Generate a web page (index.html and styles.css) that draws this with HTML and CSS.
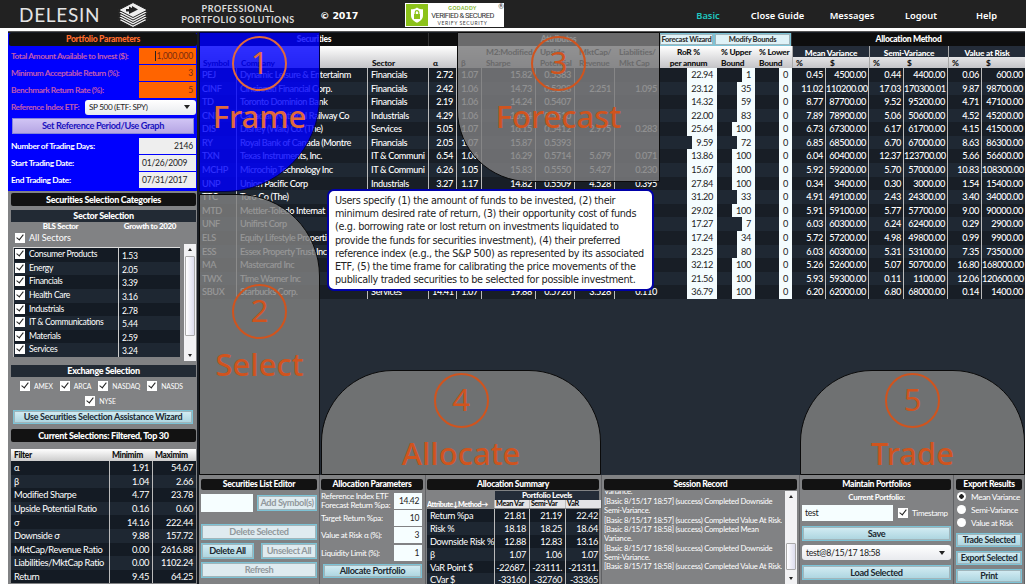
FILE: index.html
```html
<!DOCTYPE html>
<html lang="en">
<head>
<meta charset="utf-8">
<title>Delesin Portfolio Solutions</title>
<link rel="stylesheet" href="styles.css">
</head>
<body>
<header class="top">
  <div class="brand">DELESIN</div>
  <svg class="logo" viewBox="0 0 30 26" width="30" height="26">
    <g fill="#eee" stroke="#222" stroke-width="1">
      <path d="M.5 18 15 11l14.500 7L15 25.500z"/><path d="M.5 15.500 15 8.500l14.500 7L15 23z"/><path d="M.5 13 15 6l14.500 7L15 20.500z"/><path d="M.5 10.500 15 3.500l14.500 7L15 18z"/><path d="M.5 8 15 .5l14.500 7.500L15 15.500z"/>
    </g>
    <path d="M11 4.500v2.500h-3v2.500h3v2.500l9-4.500-6-3.500v2z" fill="#222"/>
  </svg>
  <div class="tag">PROFESSIONAL<br>PORTFOLIO SOLUTIONS</div>
  <div class="copy">© 2017</div>
  <div class="badge">
    <div class="badge-ico"><svg viewBox="0 0 22 22" width="22" height="22"><path d="M11 3.500c2 1.500 4 1.800 6 1.800v6c0 4-3 6-6 7.500-3-1.500-6-3.500-6-7.500v-6c2 0 4-.3 6-1.800z" fill="#fff"/><rect x="8" y="10" width="6" height="5" fill="#8cc21a"/><path d="M9.200 10V8.500a1.800 1.800 0 0 1 3.600 0V10" fill="none" stroke="#8cc21a" stroke-width="1.200"/></svg></div>
    <div class="badge-txt"><span class="gd">GODADDY</span><span class="vs">VERIFIED &amp; SECURED</span><span class="vf">VERIFY SECURITY</span></div>
    <span class="reg">®</span>
  </div>
  <nav class="nav"><a class="on">Basic</a><a>Close Guide</a><a>Messages</a><a>Logout</a><a>Help</a></nav>
</header>
<div class="app">
  <aside class="side">
    <section class="params">
      <h2 class="bar orange">Portfolio Parameters</h2>
      <div class="prow hot"><label>Total Amount Available to Invest ($):</label><span class="val"><i class="caret"></i>1,000,000</span></div>
      <div class="prow hot"><label>Minimum Acceptable Return (%):</label><span class="val">3</span></div>
      <div class="prow hot"><label>Benchmark Return Rate (%):</label><span class="val">5</span></div>
      <div class="refidx"><label>Reference Index ETF:</label><span class="combo">SP 500 (ETF: SPY)<i class="tri"></i></span></div>
      <div class="btn big lilac">Set Reference Period/Use Graph</div>
      <div class="prow"><label>Number of Trading Days:</label><span class="val">2146</span></div>
      <div class="prow"><label>Start Trading Date:</label><span class="val left">01/26/2009</span></div>
      <div class="prow"><label>End Trading Date:</label><span class="val left">07/31/2017</span></div>
    </section>
    <section class="cats">
      <h2 class="bar">Securities Selection Categories</h2>
      <h3 class="sub">Sector Selection</h3>
      <div class="cathead"><span>BLS Sector</span><span>Growth to 2020</span></div>
      <div class="all"><i class="ck"></i>All Sectors</div>
      <div class="listwrap"><div class="list" id="sectors"></div><div class="sb"><i class="up"></i><i class="thumb"></i><i class="dn"></i></div></div>
      <h3 class="sub ex">Exchange Selection</h3>
      <div class="exch"><span><i class="ck"></i>AMEX</span><span><i class="ck"></i>ARCA</span><span><i class="ck"></i>NASDAQ</span><span><i class="ck"></i>NASDS</span></div>
      <div class="exch nyse"><span><i class="ck"></i>NYSE</span></div>
      <div class="btn wiz">Use Securities Selection Assistance Wizard</div>
      <h2 class="bar cur">Current Selections: Filtered, Top 30</h2>
      <table class="filter"><thead><tr><th>Filter</th><th>Minimim</th><th>Maximim</th></tr></thead><tbody id="filters"></tbody></table>
    </section>
  </aside>
  <main class="main">
    <section class="grid">
      <div class="ghead">
        <div class="g t-sec">Securities</div><div class="g t-al"></div><div class="g t-att">Attributes</div><div class="g btn t-fw">Forecast Wizard</div><div class="g btn t-mb">Modify Bounds</div><div class="g t-am">Allocation Method</div>
      </div>
      <div class="cols chead">
        <span>Symbol</span><span>Company</span><span>Sector</span><span>α</span><span>β</span><span>M2:Modified<br>Sharpe</span><span>Upside<br>Potential</span><span>MktCap/<br>Revenue</span><span>Liabilities/<br>Mkt Cap</span><span class="ctr">RoR %<br>per annum</span><span>% Upper<br>Bound</span><span>% Lower<br>Bound</span>
        <div class="meth"><b>Mean Variance</b><em>%</em><em>$</em></div><div class="meth m2"><b>Semi-Variance</b><em>%</em><em>$</em></div><div class="meth m3"><b>Value at Risk</b><em>%</em><em>$</em></div>
      </div>
      <div id="rows"></div>
      <div class="ov frame"><i>1</i><b>Frame</b></div>
      <div class="ov select"><i>2</i><b>Select</b></div>
      <div class="ov forecast"><i>3</i><b>Forecast</b></div>
      <div class="ov allocate"><i>4</i><b>Allocate</b></div>
      <div class="ov trade"><i>5</i><b>Trade</b></div>
      <div class="tip">Users specify (1) the amount of funds to be invested, (2) their<br>minimum desired rate of return, (3) their opportunity cost of funds<br>(e.g. borrowing rate or lost return on investments liquidated to<br>provide the funds for securities investment), (4) their preferred<br>reference index (e.g., the S&amp;P 500) as represented by its associated<br>ETF, (5) the time frame for calibrating the price movements of the<br>publically traded securities to be selected for possible investment.</div>
    </section>
    <section class="dock">
      <div class="pane p1"><h2 class="bar">Securities List Editor</h2>
        <div class="r a"><span class="inp"></span><span class="btn off">Add Symbol(s)</span></div>
        <div class="btn off b1">Delete Selected</div>
        <div class="r b"><span class="btn">Delete All</span><span class="btn off">Unselect All</span></div>
        <div class="btn off b2">Refresh</div>
      </div>
      <div class="pane p2"><h2 class="bar">Allocation Parameters</h2>
        <div class="ap"><label>Reference Index ETF<br>Forecast Return %pa:</label><span>14.42</span></div>
        <div class="ap"><label>Target Return %pa:</label><span>10</span></div>
        <div class="ap"><label>Value at Risk α (%):</label><span>3</span></div>
        <div class="ap"><label>Liquidity Limit (%):</label><span>1</span></div>
        <div class="btn">Allocate Portfolio</div>
      </div>
      <div class="pane p3"><h2 class="bar">Allocation Summary</h2>
        <div class="lv">Portfolio Levels</div>
        <div class="sm sh"><span>Attribute↓Method→</span><span>Mean Var</span><span>Semi-Var</span><span>VaR</span></div>
        <div id="summary"></div>
      </div>
      <div class="pane p4"><h2 class="bar">Session Record</h2>
        <div class="logwrap"><div class="log"><div class="cut">Variance.</div>[Basic 8/15/17 18:57] (success) Completed Downside<br>Semi-Variance.<br>[Basic 8/15/17 18:57] (success) Completed Value At Risk.<br>[Basic 8/15/17 18:58] (success) Completed Mean<br>Variance.<br>[Basic 8/15/17 18:58] (success) Completed Downside<br>Semi-Variance.<br>[Basic 8/15/17 18:58] (success) Completed Value At Risk.</div><div class="sb low"><i class="up"></i><i class="thumb"></i><i class="dn"></i></div></div>
      </div>
      <div class="pane p5"><h2 class="bar">Maintain Portfolios</h2>
        <div class="cp">Current Portfolio:</div>
        <div class="r"><span class="inp">test</span><span class="ts"><i class="ck"></i>Timestamp</span></div>
        <div class="btn">Save</div>
        <div class="combo">test@8/15/17 18:58<i class="tri"></i></div>
        <div class="btn">Load Selected</div>
      </div>
      <div class="pane p6"><h2 class="bar">Export Results</h2>
        <div class="rad on">Mean Variance</div><div class="rad">Semi-Variance</div><div class="rad">Value at Risk</div>
        <div class="btn">Trade Selected</div><div class="btn">Export Selected</div><div class="btn">Print</div>
      </div>
    </section>
  </main>
</div>
<script src="app.js"></script>
</body>
</html>
```
FILE: styles.css
```css
* { box-sizing: border-box; }
body { margin: 0; width: 1026px; height: 586px; overflow: hidden; background: #fff; font: 9.5px/12px Lato, "Noto Sans", sans-serif; letter-spacing: -.35px; color: #fff; }
h2, h3 { margin: 0; font-size: 9px; letter-spacing: -.3px; text-align: center; font-weight: 900; }
i, em { font-style: normal; }
.top { height: 28px; background: #222; display: flex; align-items: center; padding-left: 19px; letter-spacing: 0; }
.brand { width: 99px; font-size: 19px; font-weight: 400; letter-spacing: .7px; line-height: 28px; padding-top: 2px; white-space: nowrap; color: #e4e4e4; }
.logo { margin-top: 1px; }
.tag { width: 114px; margin-left: 33px; text-align: center; font-size: 9px; font-weight: 700; letter-spacing: .53px; line-height: 11.500px; white-space: nowrap; color: #ddd; }
.copy { margin-left: 25px; width: 85px; font: bold 9.500px "DejaVu Sans", sans-serif; letter-spacing: -.2px; padding-top: 3px; }
.badge { width: 99px; height: 24px; background: #fff; display: flex; align-items: center; position: relative; padding: 1px; margin-top: 2px; }
.badge-ico { background: #8cc21a; width: 22px; height: 22px; }
.badge-txt { display: flex; flex-direction: column; align-items: center; flex: 1; padding-right: 6px; white-space: nowrap; }
.gd { font-size: 5px; line-height: 6px; color: #7ab31a; font-weight: 700; letter-spacing: .4px; }
.vs { font: 7.500px/9px Roboto, sans-serif; color: #333; letter-spacing: -.5px; font-weight: 400; }
.vf { font-size: 5px; line-height: 6px; color: #444; letter-spacing: .6px; }
.reg { position: absolute; right: 0; top: 0; font-size: 7px; line-height: 6px; color: #333; }
.nav { flex: 1; display: grid; grid-template-columns: 64px 75px 74px 64px 67px; justify-content: end; text-align: center; font: 600 9.300px/12px "Noto Sans", sans-serif; padding: 3px 6px 0 0; white-space: nowrap; }
.on { color: #1fc8c0; }
.app { margin: 3px 1px 0 8px; height: 553px; border-top: 1px solid #555; background: #181c22; display: flex; padding-top: 1px; }
.side { width: 189px; flex: none; }
.main { flex: 1; margin-left: 2px; min-width: 0; display: flex; flex-direction: column; }
.bar { background: #121212; border-radius: 2px; height: 13px; line-height: 13px; }
.params { background: #0000fe; height: 158px; padding: 0 1px 0 3px; }
.params .bar { margin: 0 -1px 1px -2px; }
.orange { color: #ff6c2c; font-size: 8.600px; }
.prow { display: flex; justify-content: space-between; height: 17.300px; align-items: center; white-space: nowrap; }
.prow label, .refidx label { font-size: 8.400px; font-weight: 700; }
.hot label, .refidx label { color: #c05ab0; letter-spacing: -.45px; }
.hot label { font-size: 8.400px; }
.val { width: 57px; height: 16px; background: #eee; color: #222; text-align: right; padding-right: 3px; line-height: 16px; font-size: 8.500px; letter-spacing: -.2px; }
.val.left { text-align: left; padding-left: 3px; }
.hot .val { background: #ff6400; color: #7a2c10; }
.caret { display: inline-block; width: 1px; height: 10px; background: #222; vertical-align: -2px; }
.refidx { display: flex; align-items: center; justify-content: space-between; height: 17px; white-space: nowrap; }
.combo { display: flex; align-items: center; justify-content: space-between; background: linear-gradient(#fff, #e8eaee); color: #222; height: 15px; border-radius: 3px; padding: 0 6px 0 4px; font-size: 8.800px; }
.refidx .combo { width: 111px; font-size: 8.200px; }
.refidx label { font-size: 8.200px; }
.tri { border: 3px solid transparent; border-top: 4px solid #222; border-bottom: 0; }
.btn { display: block; background: linear-gradient(#d4edf4, #abd4df); border: 1px solid #7cc3d6; outline: 1px solid #a0b5bb; outline-offset: -2px; color: #202830; text-align: center; font-weight: 700; font-size: 9.200px; height: 14px; line-height: 12px; white-space: nowrap; }
.btn.off { background: #dfebf0; color: #91989c; }
.lilac { background: linear-gradient(#d0c4f4, #b6a6e4); border-color: #8585d8; color: #1a12c0; height: 16px; line-height: 14px; margin: 2px 2px 3px 1px; outline: 0; }
.cats { background: #818284; height: 393px; padding: 2px 1px 0 3px; }
.cats .bar { margin: 0; height: 13px; line-height: 13px; }
.sub { background: #222a34; height: 12px; line-height: 12px; margin-top: 4px; }
.cathead { display: grid; grid-template-columns: 99px 80px; text-align: center; font-size: 8px; font-weight: 900; line-height: 9px; margin-top: 0; }
.all { display: flex; gap: 4px; align-items: center; padding-left: 4px; height: 12px; margin-top: 1px; letter-spacing: 0; font-size: 9px; }
.ck { flex: none; display: inline-block; width: 10px; height: 10px; background: #fff; position: relative; }
.ck::after { content: ""; position: absolute; left: 3px; top: 0; width: 3px; height: 6px; border: solid #222; border-width: 0 1.500px 1.500px 0; transform: rotate(38deg); }
.listwrap { display: flex; justify-content: space-between; height: 117px; margin-top: 0; padding-left: 2px; }
.list { width: 167px; height: 110px; margin-top: 3px; background: #141b24; overflow: hidden; border-top: 1px solid #ddd; border-left: 1px solid #bbb; }
.list div { height: 13.650px; display: grid; grid-template-columns: 10px 94px 60px; }
.list div:nth-child(even) { background: #1e2732; }
.list .ck { margin-top: 1px; margin-left: 1px; }
.list span { padding-left: 5px; font-size: 8.600px; line-height: 12px; white-space: nowrap; }
.list span:last-child { border-left: 1px solid #ccc; line-height: 16px; padding-left: 3px; }
.sb { width: 12px; background: #f2f2f4; display: flex; flex-direction: column; align-items: center; }
.sb .up { border: 2.500px solid transparent; border-top: 0; border-bottom: 3.500px solid #222; margin-top: 4px; }
.sb .thumb { width: 10px; height: 80px; margin-top: 5px; background: linear-gradient(90deg, #fff, #dde); border: 1px solid #aaa; border-radius: 1px; }
.sb .dn { border: 2.500px solid transparent; border-bottom: 0; border-top: 3.500px solid #222; margin: auto 0 4px; }
.cats .ex { height: 12px; line-height: 12px; }
.exch { display: flex; padding: 3px 13px 0 9px; height: 15px; font-size: 6.800px; font-weight: 400; justify-content: space-between; line-height: 12px; letter-spacing: -.1px; }
.exch span { display: flex; gap: 4px; align-items: center; height: 12px; }
.exch.nyse { justify-content: center; padding: 3px 19px 0 13px; height: 15px; }
.wiz { margin: 3px 3px 5px 2px; letter-spacing: -.3px; font-size: 9px; }
.filter { margin-top: 7px; width: 185px; border-spacing: 0; table-layout: fixed; }
.filter th { background: linear-gradient(#fff, #ccc); color: #111; text-align: left; font-size: 8.400px; font-weight: 900; padding: 0 3px; height: 12px; line-height: 10px; }
.filter th:first-child { width: 98px; }
.filter th:nth-child(2) { width: 43px; }
.filter td { height: 13.600px; line-height: 13px; padding: 0 3px; text-align: right; border-left: 1px solid #bbb; background: #141b24; font-size: 9.300px; }
.filter td:first-child { text-align: left; border: 0; white-space: nowrap; }
.filter tr:nth-child(even) td { background: #1e2732; }
.grid { position: relative; height: 442px; background: #242c36; }
.ghead { display: grid; grid-template-columns: 229px 29px 202px 55px 77px 1fr; height: 13px; background: #0e0e0e; }
.g { font-size: 8.500px; font-weight: 900; line-height: 13px; text-align: center; height: 13px; border-left: 1px solid #333; letter-spacing: -.3px; }
.g.btn { line-height: 12px; background: #dff2f7; border: 1px solid #7cc3d6; font-size: 7.500px; color: #333; }
.cols { display: grid; grid-template-columns: 38px 131px 61px 28px 25px 54px 39px 40px 45px 57px 38px 37px 34px 43px 35px 44px 34px 1fr; }
.chead { height: 22px; background: linear-gradient(#fff, #c4c4c8); color: #111; font-size: 8.300px; font-weight: 900; line-height: 10.500px; align-items: end; letter-spacing: -.2px; white-space: nowrap; }
.chead > span { padding-left: 4px; }
.chead .ctr { text-align: center; padding: 0; }
.meth { grid-column: 13 / 15; display: grid; grid-template-columns: 34px 1fr; height: 22px; padding-top: 2px; border-left: 1px solid #aaa; background: linear-gradient(#242c38 11px, #e4e4e6 11px, #c4c4c8); }
.meth.m2 { grid-column: 15 / 17; }
.meth.m3 { grid-column: 17 / 19; }
.meth b { grid-column: 1 / 3; color: #fff; text-align: center; line-height: 10px; height: 9px; }
.meth em { padding-left: 3px; line-height: 10px; }
.row { height: 13.580px; background: #181e26; white-space: nowrap; line-height: 14px; font-weight: 500; font-size: 9.200px; }
.row:nth-child(even) { background: #1f2833; }
.row span { overflow: hidden; padding: 0 3px; border-right: 1px solid #bbb; height: 13.600px; text-align: right; }
.row span:nth-child(-n+3) { text-align: left; }
.row span:nth-child(2) { letter-spacing: -.42px; }
.row span:nth-child(n+9):nth-child(-n+12), .row span:last-child { border-right: 0; }
.row span:nth-child(9) { border-right: 1px solid #bbb; }
.row span:nth-child(n+10):nth-child(-n+12) { padding: 0; }
.row span:nth-child(n+13) { padding: 0 2px 0 0; }
.row u { display: inline-block; text-decoration: none; height: 13.600px; background: #f4fcfe; color: #222; padding: 0 4px; font-weight: 400; }
.ov { position: absolute; background: rgba(110,110,111,.8); border: 1px solid #0a0a0a; color: #d0541e; display: flex; flex-direction: column; align-items: center; letter-spacing: 0; }
.ov i { width: 55px; height: 55px; border: 2.500px solid #d0541e; border-radius: 50%; font: 31px/49px "Noto Sans", sans-serif; text-align: center; flex: none; }
.ov b { font: 500 31px/40px "Noto Sans", sans-serif; letter-spacing: 0; padding-top: 5px; }
.frame { left: 0; top: -1px; width: 121px; height: 160px; background: rgba(0,0,255,.82); border-radius: 0 0 95px 0; padding-top: 3px; }
.frame, .frame i { color: #e0693c; border-color: #e0693c; }
.frame { border-color: #00004c; }
.select, .allocate, .trade { background: rgba(128,128,128,.82); }
.select { left: 0; top: 161px; width: 121px; height: 281px; border-radius: 0 82px 0 0; padding-top: 89px; }
.forecast { left: 258px; top: -1px; width: 203px; height: 150px; border-radius: 0 0 0 72px; padding-top: 3px; background: rgba(124,124,125,.84); }
.allocate { left: 122px; top: 337px; width: 280px; height: 105px; border-radius: 72px 72px 0 0; padding-top: 2px; }
.trade { left: 601px; top: 337px; width: 225px; height: 105px; border-radius: 72px 72px 0 0; padding-top: 2px; }
.tip { position: absolute; left: 128px; top: 156px; width: 327px; height: 102px; border: 2px solid #0000a8; border-radius: 7px; background: #fff; color: #222; font: 9.700px/13.200px "DejaVu Sans", sans-serif; letter-spacing: -.33px; padding: 3px 6px; white-space: nowrap; }
.dock { height: 109px; background: #818284; display: flex; }
.pane { border-right: 1px solid #606164; padding: 4px 2px 0; overflow: hidden; white-space: nowrap; }
.pane .bar { height: 11px; line-height: 11px; font-size: 8.600px; }
.p1 { width: 121px; } .p2 { width: 106px; } .p3 { width: 176px; } .p4 { width: 198px; } .p5 { width: 154px; } .p6 { flex: 1; }
.inp { background: #f6feff; color: #222; height: 16px; padding: 0 3px; line-height: 15px; font-size: 8.800px; }
.p1 .r { display: grid; gap: 4px; }
.p1 .a { grid-template-columns: 52px 1fr; margin-top: 4px; height: 30px; }
.p1 .a .inp { height: 18px; }
.p1 .a .btn { height: 16px; margin-top: 1px; line-height: 14px; }
.p1 .b { grid-template-columns: 53px 1fr; margin: 3px 0; gap: 7px; }
.p1 .btn { height: 16px; line-height: 14px; }
.p2 { padding-left: 1px; }
.ap { display: flex; justify-content: space-between; align-items: center; height: 17.400px; font-size: 8.200px; line-height: 8.500px; padding-right: 1px; }
.ap:nth-child(2) { margin-top: 2px; }
.ap span { width: 28px; background: #f6feff; color: #222; text-align: right; padding-right: 3px; line-height: 16px; height: 16px; font-size: 8.500px; }
.p2 .btn { margin: 2px 1px 0 2px; }
.p3 { padding-left: 1px; }
.lv { margin: 1px 0 0 68px; background: #242c38; text-align: center; font-size: 8px; font-weight: 900; height: 9px; line-height: 9px; }
.sm { display: grid; grid-template-columns: 67px 35px 36px 36px; height: 12.900px; background: #141b24; line-height: 14px; font-size: 9.200px; }
.sm:nth-child(even) { background: #1e2732; }
.sm span { text-align: right; padding-right: 3px; border-left: 1px solid #bbb; overflow: hidden; }
.sm span:first-child { text-align: left; padding: 0 0 0 3px; border: 0; }
.sh { background: none; height: 9px; line-height: 9px; font-size: 7.200px; font-weight: 900; }
.sh span { text-align: left; padding: 0 0 0 1px; background: #e4e4e6; color: #111; height: 8px; line-height: 8px; }
.sm.sh span:first-child { background: none; color: #fff; padding: 0; letter-spacing: -.4px; line-height: 10px; height: 10px; }
.sm.sh span:nth-child(n+2) { text-align: left; padding: 0 0 0 1px; }
.logwrap { display: flex; justify-content: space-between; height: 93px; margin-top: 1px; }
.log { font-size: 7.700px; line-height: 9.350px; overflow: hidden; letter-spacing: -.26px; }
.cut { height: 6px; line-height: 1px; overflow: hidden; }
.low .thumb { margin-top: 45px; height: 27px; }
.cp { text-align: center; font-size: 8px; font-weight: 700; line-height: 14px; }
.p5 .r { display: flex; gap: 5px; align-items: center; height: 17px; }
.p5 .inp { width: 91px; }
.ts { display: flex; gap: 4px; align-items: center; font-size: 8px; }
.p5 .btn, .p5 .combo { margin-top: 4.500px; height: 15px; line-height: 13px; }
.rad { display: flex; align-items: center; gap: 5px; height: 13px; font-size: 8.300px; }
.rad::before { content: ""; width: 9px; height: 9px; margin-left: 1px; border-radius: 50%; background: #fff; flex: none; }
.rad.on { color: #fff; }
.rad.on::before { background: radial-gradient(#222 2px, #fff 2.500px); }
.p6 .btn { margin-top: 4px; height: 14px; font-size: 8.800px; }
```
FILE: app.js
```js
const rows = `PEJ|Dynamic Leisure & Entertainm|Financials|2.72|1.07|15.82|0.5383|||22.94|1|0|0.45|4500.00|0.44|4400.00|0.06|600.00
CINF|Cincinnati Financial Corp.|Financials|2.42|1.06|14.73|0.5208|2.251|1.095|23.12|35|0|11.02|110200.00|17.03|170300.01|9.87|98700.00
TD|Toronto Dominion Bank|Financials|2.19|1.06|14.24|0.5407|||14.32|59|0|8.77|87700.00|9.52|95200.00|4.71|47100.00
CNI|Canadian National Railway Co|Industrials|4.29|1.06|15.44|0.5510|||22.00|83|0|7.89|78900.00|5.06|50600.00|4.52|45200.00
DIS|Disney (Walt) Co. (The)|Services|5.05|1.07|16.15|0.5412|2.975|0.283|25.64|100|0|6.73|67300.00|6.17|61700.00|4.15|41500.00
RY|Royal Bank of Canada (Montre|Financials|2.05|1.07|15.87|0.5393|||9.59|72|0|6.85|68500.00|6.70|67000.00|8.63|86300.00
TXN|Texas Instruments, Inc.|IT & Communi|6.54|1.06|16.29|0.5714|5.679|0.071|13.86|100|0|6.04|60400.00|12.37|123700.00|5.66|56600.00
MCHP|Microchip Technology Inc|IT & Communi|6.26|1.05|15.83|0.5550|5.427|0.230|15.67|100|0|5.92|59200.00|5.70|57000.00|10.83|108300.00
UNP|Union Pacific Corp|Industrials|3.27|1.17|14.82|0.5509|4.528|0.395|27.84|100|0|0.34|3400.00|0.30|3000.00|1.54|15400.00
TTC|Toro Co (The)||||||||31.20|33|0|4.91|49100.00|2.43|24300.00|3.40|34000.00
MTD|Mettler-Toledo Internat||||||||29.02|100|0|5.91|59100.00|5.77|57700.00|9.00|90000.00
UNF|Unifirst Corp||||||||17.27|7|0|6.03|60300.00|6.24|62400.00|0.29|2900.00
ELS|Equity Lifestyle Properti||||||||17.24|34|0|5.72|57200.00|4.98|49800.00|0.99|9900.00
ESS|Essex Property Trust Inc||||||||23.25|80|0|6.03|60300.00|5.31|53100.00|7.35|73500.00
MA|Mastercard Inc||||||||32.12|100|0|5.26|52600.00|5.07|50700.00|16.80|168000.00
TWX|Time Warner Inc||||||||21.56|100|0|5.93|59300.00|0.11|1100.00|12.06|120600.00
SBUX|Starbucks Corp.|Services|14.41|1.07|19.88|0.5726|3.528|0.110|36.79|100|0|6.20|62000.00|6.80|68000.00|0.14|1400.00`.split("\n").map(r => r.split("|"));

const esc = s => s.replace(/&/g, "&amp;");
document.getElementById("rows").innerHTML = rows.map(r =>
  '<div class="cols row">' + r.map((c, i) =>
    '<span>' + (i > 8 && i < 12 ? '<u>' + c + '</u>' : esc(c)) + '</span>').join("") + '</div>'
).join("");

const sectors = [["Consumer Products", "1.53"], ["Energy", "2.05"], ["Financials", "3.39"], ["Health Care", "3.16"], ["Industrials", "2.78"], ["IT & Communications", "5.44"], ["Materials", "2.59"], ["Services", "3.24"]];
document.getElementById("sectors").innerHTML = sectors.map(([n, g]) =>
  `<div><i class="ck"></i><span>${esc(n)}</span><span>${g}</span></div>`).join("");

const filters = [["α", "1.91", "54.67"], ["β", "1.04", "2.66"], ["Modified Sharpe", "4.77", "23.78"], ["Upside Potential Ratio", "0.16", "0.60"], ["σ", "14.16", "222.44"], ["Downside σ", "9.88", "157.72"], ["MktCap/Revenue Ratio", "0.00", "2616.88"], ["Liabilities/MktCap Ratio", "0.00", "1102.24"], ["Return", "9.45", "64.25"]];
document.getElementById("filters").innerHTML = filters.map(f =>
  "<tr>" + f.map(c => `<td>${c}</td>`).join("") + "</tr>").join("");

const summary = [["Return %pa", "21.81", "21.19", "22.42"], ["Risk %", "18.18", "18.25", "18.64"], ["Downside Risk %", "12.88", "12.83", "13.16"], ["β", "1.07", "1.06", "1.07"], ["VaR Point $", "-22687.", "-23111.", "-21311."], ["CVar $", "-33160", "-32760", "-33365"]];
document.getElementById("summary").innerHTML = summary.map(s =>
  '<div class="sm">' + s.map(c => `<span>${c}</span>`).join("") + "</div>").join("");
```
